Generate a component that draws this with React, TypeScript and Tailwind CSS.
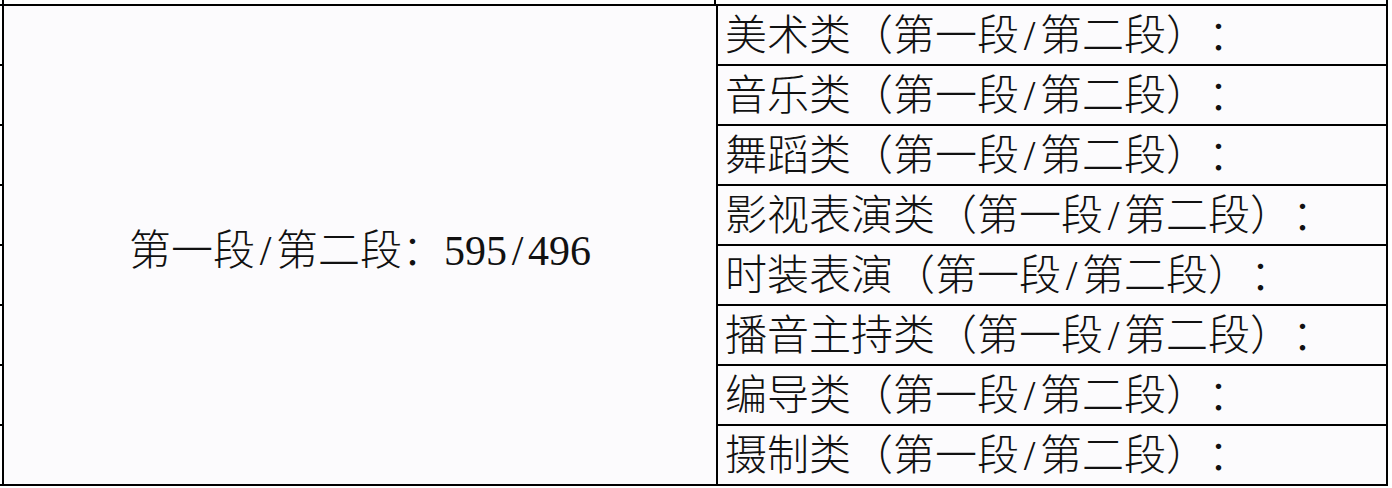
import React from "react";

const rows = [
  "美术类",
  "音乐类",
  "舞蹈类",
  "影视表演类",
  "时装表演",
  "播音主持类",
  "编导类",
  "摄制类",
];

const FONT = {
  fontFamily: '"Liberation Serif", "Noto Sans CJK SC", serif',
};

function Slash() {
  return <span className="inline-block w-[0.5em] text-center">/</span>;
}

export default function App() {
  return (
    <div
      className="flex h-[488px] w-[1392px] overflow-hidden bg-white text-[42px] font-light leading-none text-[#111] [text-spacing-trim:space-all]"
      style={FONT}
    >
      {/* ticks of the neighbouring column */}
      <div className="flex w-[2px] flex-col">
        <div className="h-[4px]" />
        <div className="h-[2px] bg-black" />
        {rows.map((r) => (
          <React.Fragment key={r}>
            <div className="h-[58px]" />
            <div className="h-[2px] bg-black" />
          </React.Fragment>
        ))}
      </div>

      <div className="flex w-[1386px] flex-col">
        {/* vertical lines continue above the top border */}
        <div className="flex h-[4px]">
          <div className="w-[714px] border-x-2 border-black" />
          <div className="flex-1 border-r-2 border-black" />
        </div>

        <div className="flex h-[482px] border-2 border-black bg-[#fcfbfd]">
          <div className="flex w-[714px] items-center justify-center border-r-2 border-black pt-[12px]">
            <span className="whitespace-nowrap">
              第一段<Slash />第二段：595<Slash />496
            </span>
          </div>
          <div className="flex flex-1 flex-col">
            {rows.map((r, i) => (
              <div
                key={r}
                className={
                  i === 0
                    ? "flex h-[58px] items-center pl-[7px] pt-[2px] whitespace-nowrap"
                    : "flex h-[60px] items-center border-t-2 border-black pl-[7px] pt-[2px] whitespace-nowrap"
                }
              >
                {r}（第一段<Slash />第二段）：
              </div>
            ))}
          </div>
        </div>
      </div>
    </div>
  );
}
